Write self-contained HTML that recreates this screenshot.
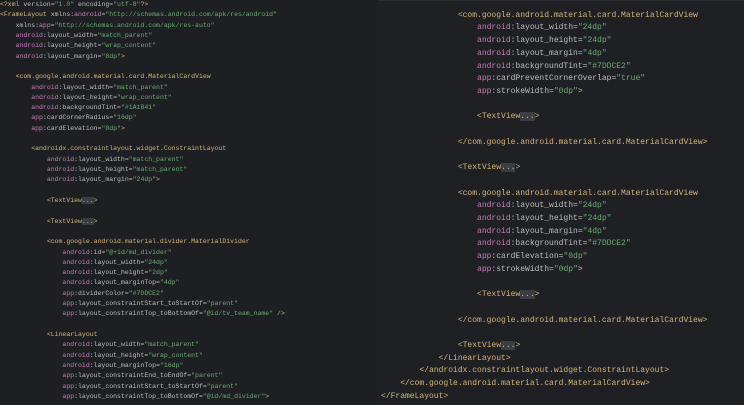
<!DOCTYPE html>
<html><head><meta charset="utf-8"><style>
html,body{margin:0;padding:0;background:#1e1f22;width:744px;height:404px;overflow:hidden}
pre{margin:0;position:absolute;font-family:"Liberation Mono",monospace;color:#bcbec4;white-space:pre}
#l{left:0;top:0;font-size:6.5px;line-height:10.32px}
#r{left:381px;top:9.7px;font-size:8px;line-height:12.7px}
#rp{position:absolute;left:378px;top:0;width:366px;height:404px;background:#1f2023;border-top:1px solid #2c2d31}
.t{color:#d5b778}.n{color:#c77dbb}.v{color:#6aab73}.f{background:#3b3d42;color:#bcbec4}.p{color:#bcbec4}
</style></head><body>
<pre id="l"><span class="t">&lt;?xml </span>version=<span class="v">"1.0"</span> encoding=<span class="v">"utf-8"</span><span class="t">?&gt;</span>
<span class="t">&lt;FrameLayout </span>xmlns:<span class="n">android</span>=<span class="v">"http://schemas.android.com/apk/res/android"</span>
    xmlns:<span class="n">app</span>=<span class="v">"http://schemas.android.com/apk/res-auto"</span>
    <span class="n">android</span>:layout_width=<span class="v">"match_parent"</span>
    <span class="n">android</span>:layout_height=<span class="v">"wrap_content"</span>
    <span class="n">android</span>:layout_margin=<span class="v">"8dp"</span><span class="t">&gt;</span>

    <span class="t">&lt;com.google.android.material.card.MaterialCardView</span>
        <span class="n">android</span>:layout_width=<span class="v">"match_parent"</span>
        <span class="n">android</span>:layout_height=<span class="v">"wrap_content"</span>
        <span class="n">android</span>:backgroundTint=<span class="v">"#1A1B41"</span>
        <span class="n">app</span>:cardCornerRadius=<span class="v">"16dp"</span>
        <span class="n">app</span>:cardElevation=<span class="v">"0dp"</span><span class="t">&gt;</span>

        <span class="t">&lt;androidx.constraintlayout.widget.ConstraintLayout</span>
            <span class="n">android</span>:layout_width=<span class="v">"match_parent"</span>
            <span class="n">android</span>:layout_height=<span class="v">"match_parent"</span>
            <span class="n">android</span>:layout_margin=<span class="v">"24dp"</span><span class="t">&gt;</span>

            <span class="t">&lt;TextView</span><span class="f">...</span><span class="t">&gt;</span>

            <span class="t">&lt;TextView</span><span class="f">...</span><span class="t">&gt;</span>

            <span class="t">&lt;com.google.android.material.divider.MaterialDivider</span>
                <span class="n">android</span>:id=<span class="v">"@+id/md_divider"</span>
                <span class="n">android</span>:layout_width=<span class="v">"24dp"</span>
                <span class="n">android</span>:layout_height=<span class="v">"2dp"</span>
                <span class="n">android</span>:layout_marginTop=<span class="v">"4dp"</span>
                <span class="n">app</span>:dividerColor=<span class="v">"#7DDCE2"</span>
                <span class="n">app</span>:layout_constraintStart_toStartOf=<span class="v">"parent"</span>
                <span class="n">app</span>:layout_constraintTop_toBottomOf=<span class="v">"@id/tv_team_name"</span> <span class="t">/&gt;</span>

            <span class="t">&lt;LinearLayout</span>
                <span class="n">android</span>:layout_width=<span class="v">"match_parent"</span>
                <span class="n">android</span>:layout_height=<span class="v">"wrap_content"</span>
                <span class="n">android</span>:layout_marginTop=<span class="v">"16dp"</span>
                <span class="n">app</span>:layout_constraintEnd_toEndOf=<span class="v">"parent"</span>
                <span class="n">app</span>:layout_constraintStart_toStartOf=<span class="v">"parent"</span>
                <span class="n">app</span>:layout_constraintTop_toBottomOf=<span class="v">"@id/md_divider"</span><span class="t">&gt;</span></pre>
<div id="rp"></div>
<pre id="r">                <span class="t">&lt;com.google.android.material.card.MaterialCardView</span>
                    <span class="n">android</span>:layout_width=<span class="v">"24dp"</span>
                    <span class="n">android</span>:layout_height=<span class="v">"24dp"</span>
                    <span class="n">android</span>:layout_margin=<span class="v">"4dp"</span>
                    <span class="n">android</span>:backgroundTint=<span class="v">"#7DDCE2"</span>
                    <span class="n">app</span>:cardPreventCornerOverlap=<span class="v">"true"</span>
                    <span class="n">app</span>:strokeWidth=<span class="v">"0dp"</span><span class="t">&gt;</span>

                    <span class="t">&lt;TextView</span><span class="f">...</span><span class="t">&gt;</span>

                <span class="t">&lt;/com.google.android.material.card.MaterialCardView&gt;</span>

                <span class="t">&lt;TextView</span><span class="f">...</span><span class="t">&gt;</span>

                <span class="t">&lt;com.google.android.material.card.MaterialCardView</span>
                    <span class="n">android</span>:layout_width=<span class="v">"24dp"</span>
                    <span class="n">android</span>:layout_height=<span class="v">"24dp"</span>
                    <span class="n">android</span>:layout_margin=<span class="v">"4dp"</span>
                    <span class="n">android</span>:backgroundTint=<span class="v">"#7DDCE2"</span>
                    <span class="n">app</span>:cardElevation=<span class="v">"0dp"</span>
                    <span class="n">app</span>:strokeWidth=<span class="v">"0dp"</span><span class="t">&gt;</span>

                    <span class="t">&lt;TextView</span><span class="f">...</span><span class="t">&gt;</span>

                <span class="t">&lt;/com.google.android.material.card.MaterialCardView&gt;</span>

                <span class="t">&lt;TextView</span><span class="f">...</span><span class="t">&gt;</span>
            <span class="t">&lt;/LinearLayout&gt;</span>
        <span class="t">&lt;/androidx.constraintlayout.widget.ConstraintLayout&gt;</span>
    <span class="t">&lt;/com.google.android.material.card.MaterialCardView&gt;</span>
<span class="t">&lt;/FrameLayout&gt;</span></pre>
</body></html>
